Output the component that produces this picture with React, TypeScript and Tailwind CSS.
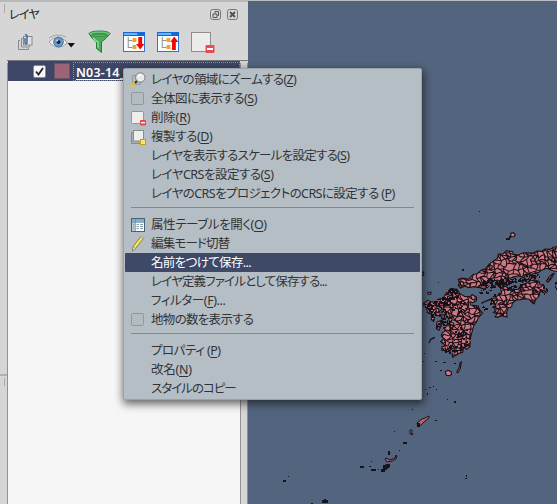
import React from "react";

type Item = {
  label: string;
  mnemonic?: string;
  tail?: string;
  icon?: "zoom" | "check" | "remove" | "copy" | "table" | "pencil";
  active?: boolean;
  tracking?: string;
};

const groups: Item[][] = [
  [
    { label: "レイヤの領域にズームする(", mnemonic: "Z", tail: ")", icon: "zoom", tracking: "tracking-[-0.65px]" },
    { label: "全体図に表示する(", mnemonic: "S", tail: ")", icon: "check", tracking: "tracking-[-0.5px]" },
    { label: "削除(", mnemonic: "R", tail: ")", icon: "remove", tracking: "tracking-[-0.2px]" },
    { label: "複製する(", mnemonic: "D", tail: ")", icon: "copy", tracking: "tracking-[-0.4px]" },
    { label: "レイヤを表示するスケールを設定する(", mnemonic: "S", tail: ")", tracking: "tracking-[-0.73px]" },
    { label: "レイヤCRSを設定する(", mnemonic: "S", tail: ")", tracking: "tracking-[-0.5px]" },
    { label: "レイヤのCRSをプロジェクトのCRSに設定する (", mnemonic: "P", tail: ")", tracking: "tracking-[-0.57px]" },
  ],
  [
    { label: "属性テーブルを開く(", mnemonic: "O", tail: ")", icon: "table", tracking: "tracking-[-0.4px]" },
    { label: "編集モード切替", icon: "pencil", tracking: "tracking-[-0.8px]" },
    { label: "名前をつけて保存...", active: true, tracking: "tracking-[-0.65px]" },
    { label: "レイヤ定義ファイルとして保存する...", tracking: "tracking-[-0.85px]" },
    { label: "フィルター(", mnemonic: "F", tail: ")...", tracking: "tracking-[-0.4px]" },
    { label: "地物の数を表示する", icon: "check", tracking: "tracking-[-0.7px]" },
  ],
  [
    { label: "プロパティ (", mnemonic: "P", tail: ")", tracking: "tracking-[-0.5px]" },
    { label: "改名(", mnemonic: "N", tail: ")", tracking: "tracking-[-0.25px]" },
    { label: "スタイルのコピー", tracking: "tracking-[-1px]" },
  ],
];

function MenuIcon({ kind }: { kind?: Item["icon"] }) {
  return (
    <svg width="16" height="16" viewBox="0 0 16 16" className="shrink-0">
      {kind === "check" && <rect x="1.5" y="1.5" width="12" height="12" rx="1" fill="#b3bcc1" stroke="#8f999b" />}
      {kind === "remove" && (
        <>
          <rect x="1.5" y="1.5" width="12" height="12" rx="1" fill="#eeeeeb" stroke="#929896" />
          <rect x="10" y="10" width="6" height="5.5" rx="1" fill="#ef4553" />
          <path d="M11 12.7h4" stroke="#fff" strokeWidth="1.3" />
        </>
      )}
      {kind === "copy" && (
        <>
          <path d="M1.5 3.5h3v8h7v3h-10z" fill="#a9adab" stroke="#858b89" />
          <rect x="3.5" y="1.5" width="10" height="10.5" fill="#eeeeec" stroke="#888e8c" />
          <rect x="10.5" y="10.5" width="5" height="5" fill="#f7e679" stroke="#c3a20d" />
        </>
      )}
      {kind === "zoom" && (
        <>
          <path d="M2.5 3.5h8v9h-8z" fill="#b4babd" stroke="#969da0" />
          <path d="M1 15l5-5" stroke="#e8c32b" strokeWidth="2.4" />
          <path d="M5 11l2-2" stroke="#282828" strokeWidth="2" />
          <circle cx="10.3" cy="5.5" r="4.7" fill="#e9eaeb" stroke="#777b7e" />
          <path d="M8 4.5Q9 2.5 11 3" stroke="#fff" strokeWidth="1.5" fill="none" />
        </>
      )}
      {kind === "table" && (
        <>
          <rect x="1.5" y="1.5" width="13" height="13" fill="#fff" stroke="#476477" />
          <path d="M2 2h12v3H2z" fill="#7faed0" />
          <path d="M2 5h3v9H2z" fill="#b8cbd7" />
          <path d="M2 5.5h12M5.5 2v12" stroke="#718b9b" strokeWidth=".7" />
          <path d="M6.5 7.5H9M10 7.5H13M6.5 9.5H9M10 9.5H13M6.5 11.5H9M10 11.5H13M3 7.5h1.5M3 9.5h1.5M3 11.5h1.5" stroke="#8ba0ad" />
        </>
      )}
      {kind === "pencil" && (
        <>
          <path d="M3 10.5L10.5 1l2.5 2-7.3 9.5L2.5 15z" fill="#f0d638" stroke="#807630" strokeWidth=".8" />
          <path d="M4.3 11.3L11.5 2.3" stroke="#fff18a" />
          <path d="M3 10.5l2.7 2L2.5 15z" fill="#e9e5d4" stroke="#67685e" strokeWidth=".5" />
          <path d="M10.5 1L11.3.3l2.3 1.9-.7.9" fill="#ddd" stroke="#777" strokeWidth=".6" />
        </>
      )}
    </svg>
  );
}

function makeRandom(seed: number) {
  let s = seed;
  return () => {
    s = (s * 16807) % 2147483647;
    return s / 2147483647;
  };
}

const random = makeRandom(4271);

// Municipal boundaries: a jittered mesh with alternating diagonals.
function makeMesh() {
  const step = 13;
  const cols = 34;
  const rows = 30;
  const pts: number[][][] = [];
  for (let r = 0; r <= rows; r++) {
    pts.push([]);
    for (let c = 0; c <= cols; c++) {
      pts[r].push([
        35 + c * step + (r % 2) * 6 + (random() - 0.5) * 12,
        70 + r * step + (random() - 0.5) * 12,
      ]);
    }
  }
  let d = "";
  const seg = (a: number[], b: number[]) => {
    const mx = (a[0] + b[0]) / 2 + (random() - 0.5) * 6;
    const my = (a[1] + b[1]) / 2 + (random() - 0.5) * 6;
    d += `M${a[0].toFixed(1)} ${a[1].toFixed(1)}L${mx.toFixed(1)} ${my.toFixed(1)}L${b[0].toFixed(1)} ${b[1].toFixed(1)}`;
  };
  for (let r = 0; r < rows; r++) {
    for (let c = 0; c < cols; c++) {
      if (random() > 0.08) seg(pts[r][c], pts[r][c + 1]);
      if (random() > 0.08) seg(pts[r][c], pts[r + 1][c]);
      if (random() > 0.65) seg(pts[r][c], pts[r + 1][c + 1]);
    }
  }
  return d;
}

const mesh = makeMesh();

// Dense groups of small islands: [cx, cy, rx, ry, count, angle]
const clusters = [
  [125, 220, 22, 16, 70, 0],
  [95, 245, 30, 14, 65, -10],
  [52, 255, 14, 10, 28, 0],
  [80, 275, 28, 20, 45, 0],
  [105, 305, 22, 14, 34, -30],
  [245, 190, 35, 14, 75, 0],
  [285, 184, 35, 10, 75, -8],
  [310, 200, 25, 8, 26, -15],
  [355, 172, 38, 7, 50, -15],
  [225, 213, 20, 7, 14, 0],
  [400, 208, 9, 12, 16, 0],
  [120, 385, 22, 14, 24, 0],
  [250, 245, 12, 22, 20, 0],
  [438, 195, 4, 14, 18, 0],
  [215, 262, 12, 8, 8, 0],
  [150, 350, 30, 35, 40, 0],
  [145, 260, 25, 22, 34, 0],
];

const specks = clusters.flatMap(([cx, cy, rx, ry, n, rot]) =>
  Array.from({ length: n }, () => {
    const a = random() * Math.PI * 2;
    const k = Math.sqrt(random());
    const t = (rot * Math.PI) / 180;
    const x = Math.cos(a) * rx * k;
    const y = Math.sin(a) * ry * k;
    return {
      x: cx + x * Math.cos(t) - y * Math.sin(t),
      y: cy + x * Math.sin(t) + y * Math.cos(t),
      w: 3 + random() * 4,
      h: 3 + random() * 3,
    };
  }),
);

const land = [
  "M145 178L158 174 175 178 190 163 200 162 215 150 225 147 240 130 262 115 265 102 280 101 290 92 308 95 310 103 325 105 340 98 370 99 380 93 395 94 405 87 420 88 430 82 444 80V155L428 152 410 145 394 151 385 158 365 163 350 162 340 172 325 167 305 173 285 176 275 184 262 180 246 184 235 177 235 195 225 209 210 203 190 200 175 203 165 198 152 204 145 196 148 188z",
  "M244 235L256 235 268 220 275 220 272 205 282 197 295 204 310 210 325 208 333 195 350 190 358 183 375 180 388 185 390 195 401 194 405 210 390 216 387 228 376 240 373 252 366 248 358 238 345 236 330 239 318 240 307 250 305 260 294 265 290 277 291 291 275 287 262 292 255 290 262 282 250 277 258 271 248 263 263 255 245 250z",
  "M100 235L108 220 120 208 140 207 149 220 165 230 181 229 187 224 200 232 199 243 188 248 180 245 181 255 205 258 208 268 218 280 205 293 200 305 191 317 185 340 181 355 180 380 170 388 161 382 158 397 147 400 128 412 126 403 134 397 132 380 121 376 124 387 119 395 95 390 96 380 107 377 92 365 101 357 94 348 96 340 107 331 101 324 107 316 122 312 116 297 111 288 106 269 96 263 70 250 85 238z",
  "M42 248L54 241 64 246 75 246 91 255 88 266 94 275 91 285 81 288 66 277 60 282 51 276 58 265 46 260z",
  "M92 285L105 284 103 296 95 297zM81 306L92 302 95 314 87 331 79 326zM118 303L132 310 128 326 118 321z",
  "M432 160L425 174 414 187 409 184 417 171 428 161zM35 157L41 156 41 165 35 168zM54 217L63 217 62 223 54 223zM64 289L74 293 71 304 64 299z",
].join("");

const loneIslands = [
  "M302 40L310 38 316 44 312 50 303 50z",
  "M106 455L114 451 123 455 125 462 119 467 109 466z",
  "M150 429L154 426 151 446 144 458 140 456 147 444z",
].join("");

const islets = [
  [454, 401, 2, 2], [447, 399, 1, 1], [433, 386, 1, 1], [436, 389, 1, 1], [429, 387, 2, 1],
  [427, 393, 1, 2], [417, 401, 1, 1], [412, 409, 1, 1], [425, 389, 1, 1], [424, 353, 1, 1],
  [423, 361, 1, 1], [394, 431, 1, 1], [435, 420, 2, 1], [411, 434, 2, 1], [403, 442, 4, 2],
  [399, 450, 1, 1], [388, 451, 2, 4], [371, 461, 1, 1], [360, 466, 4, 2], [369, 466, 2, 1],
  [371, 469, 5, 2], [378, 469, 1, 1], [383, 465, 6, 3], [381, 469, 4, 3],
  [288, 476, 1, 1], [283, 480, 3, 2], [311, 503, 2, 1], [322, 500, 6, 3], [324, 499, 2, 2],
  [465, 478, 2, 1], [466, 475, 1, 2], [438, 282, 1, 1], [435, 361, 2, 1],
  [443, 362, 3, 1], [454, 363, 2, 1], [440, 370, 2, 1], [506, 238, 4, 2], [509, 236, 2, 2],
  [462, 269, 2, 2], [479, 211, 1, 1],
];

function MapView() {
  return (
    <svg width="309" height="504" viewBox="248 0 309 504" className="block shrink-0 bg-[#53657e]">
      <defs>
        <clipPath id="land">
          <path d={land} />
        </clipPath>
      </defs>
      <path d="M248 .5H557" stroke="#b9bcc0" />
      <g transform="translate(410 220) scale(.33333)">
        <path d={land + loneIslands} fill="#cd7884" stroke="#171014" strokeWidth="3.2" />
        <path d={mesh} clipPath="url(#land)" fill="none" stroke="#1b1014" strokeWidth="3.1" />
        <g shapeRendering="crispEdges">
          {specks.map((s, i) => (
            <rect key={i} x={s.x} y={s.y} width={s.w} height={s.h} fill={i % 7 === 0 ? "#8c505c" : "#17121a"} />
          ))}
        </g>
        <path d="M57 369L62 358 75 352M214 250L228 243 245 237" stroke="#17121a" strokeWidth="4" fill="none" />
      </g>
      {islets.map(([x, y, w, h], i) => (
        <rect key={i} x={x} y={y} width={w} height={h} fill="#15141b" />
      ))}
      <path d="M417 423l5-4 3-1 4-2v2l-5 4-3 3-3 2z" fill="#b5626e" stroke="#191318" />
      <path d="M417 423h3v4h-3z" fill="#191318" />
      <path d="M410 430h2v4h-2zM386 458l4 2 5-2 1-3 1 1-1 3-4 2-5 1-2-3z" fill="#b5626e" stroke="#191318" />
      <path d="M382 472l1-4 3-4h4v3l-4 3z" fill="#17141a" />
    </svg>
  );
}

function TreeButton({ up }: { up?: boolean }) {
  return (
    <svg width="22" height="20" viewBox="0 0 23 20" preserveAspectRatio="none">
      <rect x=".5" y=".5" width="22" height="19" fill="#f8fbff" stroke="#2478d4" />
      <path d="M0 0h23v4H0z" fill="#1765d1" />
      <path d="M1 1h14v2H1z" fill="#65b4ff" />
      <path d="M5.5 5v11M5.5 8.5H10M5.5 15.5H10" stroke="#8d9092" fill="none" />
      <path d="M10 6h4v4h-4zM10 13h4v4h-4z" fill="#f4a12c" />
      {up ? (
        <path d="M18 4.5l4.3 5.5h-2.6v8h-4v-8H14z" fill="#f20505" />
      ) : (
        <path d="M16 5h4v7h2.3L18 17.5 13.7 12H16z" fill="#f20505" />
      )}
    </svg>
  );
}

function Toolbar() {
  return (
    <div className="flex h-[36px] items-center pl-[10px]">
      <svg width="17" height="18" viewBox="0 0 17 18" className="shrink-0" fill="none" stroke="#858a8c">
        <path d="M3 7.5H1.500v9h10V15" />
        <path d="M6 5.500H4.500v8.500h8V12.500" />
        <rect x="6.500" y="3.500" width="8.500" height="8.500" fill="#e2e3e2" />
        <path d="M8 5v5q1 2 2 0V3q-.5-2-2-1" stroke="#285c98" strokeWidth="1.3" />
      </svg>
      <svg width="27" height="17" viewBox="0 0 27 17" className="ml-[14px] shrink-0">
        <path d="M1 8Q9-1 18 7l1 2Q11 17 3 10z" fill="#f2f2ef" stroke="#979b9c" />
        <circle cx="10.5" cy="8" r="4.8" fill="#6d9acb" stroke="#466f9d" />
        <circle cx="10.5" cy="8" r="2" fill="#17283c" />
        <circle cx="9.2" cy="6.5" r="1" fill="#cfe2f2" />
        <path d="M1 4Q8-1.500 18 3" stroke="#a1a5a6" fill="none" />
        <path d="M19.5 9H27L23.200 13.500z" fill="#111" />
      </svg>
      <svg width="23" height="24" viewBox="0 0 23 24" className="ml-[13px] shrink-0">
        <path d="M1 3.5Q3 8 8.500 12v6.500l5 4V12Q19 8 22 3.500z" fill="#49ad58" stroke="#277b3b" />
        <ellipse cx="11.5" cy="3.7" rx="10.5" ry="2.7" fill="#74cd78" stroke="#31884a" />
        <ellipse cx="11.5" cy="4" rx="8" ry="1.3" fill="#3b974b" />
        <path d="M5 8q3 3 5 3.800v6" stroke="#a0e19b" strokeWidth="1.3" fill="none" />
      </svg>
      <div className="ml-[12px] flex gap-[12px]">
        <TreeButton />
        <TreeButton up />
      </div>
      <svg width="24" height="23" viewBox="0 0 24 23" className="ml-[12px] shrink-0">
        <rect x=".5" y="1.5" width="19" height="19" fill="#ececea" stroke="#8c8e8c" />
        <rect x="14.5" y="14" width="9" height="8" rx="1" fill="#ea4b52" />
        <path d="M16 18h6" stroke="#fff" strokeWidth="2" />
      </svg>
    </div>
  );
}

function ContextMenu() {
  return (
    <div className="absolute left-[123px] top-[68px] h-[332px] w-[299px] rounded-[2px] border border-[#99a4a8] bg-[#b6bec5] py-px text-[12.5px] text-[#303437] shadow-[1px_3px_9px_1px_rgba(20,20,20,0.65)]">
      {groups.map((items, g) => (
        <React.Fragment key={g}>
          {g > 0 && (
            <div className="h-3 pl-[7px] pr-[7px] pt-1">
              <div className="h-px bg-[#7e898b]" />
            </div>
          )}
          {items.map((item) => (
            <div
              key={item.label}
              className={`mx-px flex h-[19px] items-center pl-[5px] leading-[19px] ${item.active ? "rounded-[1px] bg-[#3e4867] text-white" : ""}`}
            >
              <MenuIcon kind={item.icon} />
              <span className={`ml-[5px] whitespace-pre ${item.tracking ?? ""}`}>
                {item.label}
                {item.mnemonic && <span className="underline underline-offset-2">{item.mnemonic}</span>}
                {item.tail}
              </span>
            </div>
          ))}
        </React.Fragment>
      ))}
    </div>
  );
}

export default function App() {
  return (
    <div className="relative flex h-[504px] w-[557px] overflow-hidden bg-[#d6d6d6] font-['Noto_Sans','Noto_Sans_CJK_JP',sans-serif] [font-feature-settings:'palt']">
      <div className="flex w-[7px] shrink-0 flex-col">
        <div className="h-[374px] border-t-2 border-[#b9b9b9]">
          <div className="ml-[3px] mt-[2px] h-[9px] w-[2px] border-r border-[#aaaaaa]" />
        </div>
        <div className="h-[130px] border-t-2 border-[#b1b1b1]">
          <div className="ml-[3px] mt-[2px] h-[8px] w-[2px] border-r border-[#aaaaaa]" />
        </div>
      </div>
      <div className="flex w-[241px] shrink-0 flex-col border-t-2 border-[#b9b9b9]">
        <div className="flex h-[22px] items-center pl-[2px] pr-[10px] pt-[3px] text-[12px] leading-[18px] text-[#202020]">
          <span className="grow tracking-[-0.7px]">レイヤ</span>
          <svg width="28" height="12" viewBox="0 0 28 12" fill="none" stroke="#555">
            <rect x=".5" y=".5" width="10" height="10" rx="2" stroke="#777" />
            <path d="M3 5h4v3.5H3zM5 4.5v-2h3.500v4H7.500" />
            <rect x="17.5" y=".5" width="10" height="10" rx="2" stroke="#777" />
            <path d="M20 3l5 5M25 3l-5 5" strokeWidth="2" />
          </svg>
        </div>
        <Toolbar />
        <div className="flex grow border-t border-[#77777a] pt-[2px]">
          <div className="flex grow flex-col border-x border-[#929292] bg-[#f6f6f6]">
            <div className="-mt-[2px] flex h-[20px] items-center bg-[#3d4666] pl-[25px] text-[12.5px] text-white">
              <div className="flex h-[13px] w-[13px] items-center justify-center rounded-[2px] border border-[#8a8a8a] bg-[#f8f8f8]">
                <svg width="11" height="11" viewBox="0 0 11 11" fill="none" stroke="#222" strokeWidth="1.8">
                  <path d="M2 5.5l2.500 3L9 2" />
                </svg>
              </div>
              <div className="ml-[8px] h-[16px] w-[16px] border border-[#6c5265] bg-[#9b6577]" />
              <span className="ml-[3px] flex h-[19px] grow items-center whitespace-pre border border-dotted border-[#9a91a0] pl-[2px] pt-[2px] font-semibold leading-[17px] tracking-[0.2px] underline underline-offset-2">
                N03-14_
              </span>
            </div>
          </div>
          <div className="w-[7px] border-r border-[#8e8e8e]" />
        </div>
      </div>
      <MapView />
      <ContextMenu />
    </div>
  );
}
